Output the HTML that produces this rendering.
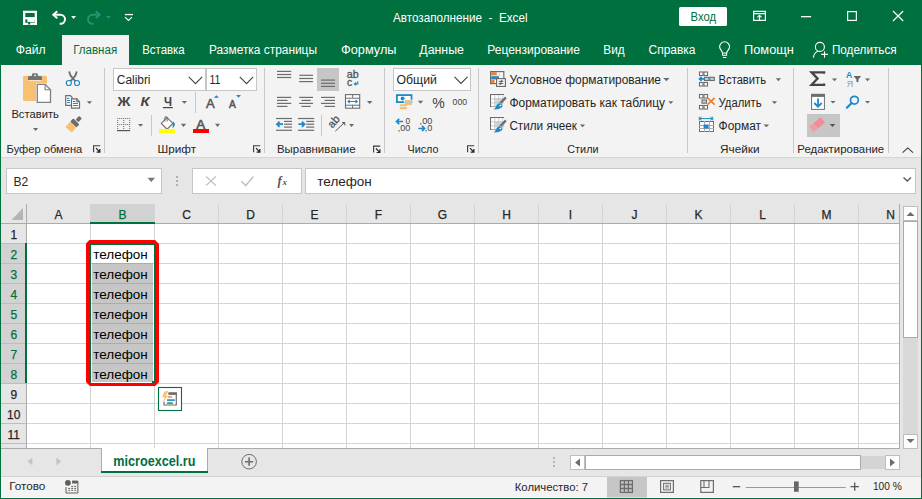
<!DOCTYPE html>
<html><head><meta charset="utf-8">
<style>
*{margin:0;padding:0}
html,body{width:922px;height:499px;overflow:hidden;background:#e6e6e6}
svg{display:block;font-family:"Liberation Sans",sans-serif}
</style></head><body>
<svg width="922" height="499" viewBox="0 0 922 499">
<rect x="0" y="0" width="922" height="65" fill="#00703f" />
<rect x="62" y="35" width="67" height="30" fill="#f3f3f3" />
<rect x="1" y="65" width="920" height="92" fill="#f3f3f3" />
<rect x="1" y="157" width="920" height="1" fill="#d5d5d5" />
<rect x="1" y="158" width="920" height="46" fill="#e6e6e6" />
<text x="393.0" y="22.0" font-size="12.2" fill="#ffffff" font-weight="normal" font-style="normal" textLength="134.5" lengthAdjust="spacingAndGlyphs">Автозаполнение&#160;&#160;-&#160;&#160;Excel</text>
<rect x="679" y="7" width="48" height="19" rx="1.5" fill="#ffffff"/>
<text x="690.5" y="20.7" font-size="12.0" fill="#00703f" font-weight="normal" font-style="normal" textLength="25.5" lengthAdjust="spacingAndGlyphs">Вход</text>
<text x="15.8" y="54.3" font-size="12.0" fill="#ffffff" font-weight="normal" font-style="normal" textLength="29.8" lengthAdjust="spacingAndGlyphs">Файл</text>
<text x="73.2" y="54.3" font-size="12.0" fill="#00703f" font-weight="normal" font-style="normal" textLength="44.0" lengthAdjust="spacingAndGlyphs">Главная</text>
<text x="142.2" y="54.3" font-size="12.0" fill="#ffffff" font-weight="normal" font-style="normal" textLength="42.5" lengthAdjust="spacingAndGlyphs">Вставка</text>
<text x="209.0" y="54.3" font-size="12.0" fill="#ffffff" font-weight="normal" font-style="normal" textLength="108.0" lengthAdjust="spacingAndGlyphs">Разметка страницы</text>
<text x="341.0" y="54.3" font-size="12.0" fill="#ffffff" font-weight="normal" font-style="normal" textLength="55.5" lengthAdjust="spacingAndGlyphs">Формулы</text>
<text x="419.3" y="54.3" font-size="12.0" fill="#ffffff" font-weight="normal" font-style="normal" textLength="44.6" lengthAdjust="spacingAndGlyphs">Данные</text>
<text x="487.3" y="54.3" font-size="12.0" fill="#ffffff" font-weight="normal" font-style="normal" textLength="92.7" lengthAdjust="spacingAndGlyphs">Рецензирование</text>
<text x="603.3" y="54.3" font-size="12.0" fill="#ffffff" font-weight="normal" font-style="normal" textLength="21.4" lengthAdjust="spacingAndGlyphs">Вид</text>
<text x="648.5" y="54.3" font-size="12.0" fill="#ffffff" font-weight="normal" font-style="normal" textLength="47.0" lengthAdjust="spacingAndGlyphs">Справка</text>
<text x="744.0" y="54.3" font-size="12.0" fill="#ffffff" font-weight="normal" font-style="normal" textLength="49.9" lengthAdjust="spacingAndGlyphs">Помощн</text>
<text x="831.9" y="54.3" font-size="12.0" fill="#ffffff" font-weight="normal" font-style="normal" textLength="64.8" lengthAdjust="spacingAndGlyphs">Поделиться</text>
<path d="M24.15 11.95 H35.85 V23.85 H24.15 Z" fill="none" stroke="#ffffff" stroke-width="2.3"/>
<rect x="25" y="17.1" width="10" height="2.3" fill="#ffffff" />
<rect x="27.4" y="19" width="7.3" height="3.2" fill="#ffffff" />
<rect x="28.1" y="21.9" width="2.1" height="2.6" fill="#00703f" />
<path d="M53.5 14.8 H60.5 A4.5 4.5 0 0 1 60.5 23.8 H59.6" fill="none" stroke="#ffffff" stroke-width="2"/>
<path d="M57.3 11.3 L53.3 14.8 L57.3 18.3" fill="none" stroke="#ffffff" stroke-width="2"/>
<path d="M71.1 16.1 H76 L73.55 18.9 Z" fill="#ffffff"/>
<path d="M99.5 14.8 H92.5 A4.5 4.5 0 0 0 92.5 23.8 H93.4" fill="none" stroke="#2a9070" stroke-width="2"/>
<path d="M95.7 11.3 L99.7 14.8 L95.7 18.3" fill="none" stroke="#2a9070" stroke-width="2"/>
<path d="M105.9 16 H110.9 L108.4 18.8 Z" fill="#2a9070"/>
<rect x="124.9" y="13.9" width="8.1" height="1.3" fill="#ffffff" />
<path d="M125 17.1 L128.5 20.4 L132 17.1" fill="none" stroke="#ffffff" stroke-width="1.2"/>
<path d="M753.6 11.4 H765.4 V20.4 H753.6 Z M753.6 13.6 H765.4 M759.5 15.2 V20.4" fill="none" stroke="#ffffff" stroke-width="1.2"/>
<path d="M757.4 17.3 L759.5 15.2 L761.6 17.3" fill="none" stroke="#ffffff" stroke-width="1.1"/>
<rect x="801" y="16" width="10.1" height="1.3" fill="#ffffff" />
<rect x="847.6" y="11.6" width="8.8" height="8.8" fill="none" stroke="#ffffff" stroke-width="1.2"/>
<path d="M893 11 L903.2 21 M903.2 11 L893 21" stroke="#ffffff" stroke-width="1.2"/>
<path d="M722.6 53 C722 50.5 719.6 49.2 719.6 46.8 A4.9 4.9 0 0 1 729.6 46.8 C729.6 49.2 727.2 50.5 726.6 53" fill="none" stroke="#ffffff" stroke-width="1.1"/>
<rect x="722.6" y="53.1" width="4" height="2.2" fill="none" stroke="#ffffff" stroke-width="1"/>
<rect x="723" y="57" width="3.4" height="1" fill="#ffffff" />
<circle cx="819.9" cy="46.9" r="4.5" fill="none" stroke="#ffffff" stroke-width="1.1"/>
<path d="M813.4 57.7 C813.8 54.2 815.8 52 818 51.3" fill="none" stroke="#ffffff" stroke-width="1.1"/>
<path d="M821.2 54.4 H827.9 M824.5 51.2 V57.7" stroke="#ffffff" stroke-width="1.1"/>
<rect x="104" y="68" width="1" height="85" fill="#c8c8c8" />
<rect x="264" y="68" width="1" height="85" fill="#c8c8c8" />
<rect x="384" y="68" width="1" height="85" fill="#c8c8c8" />
<rect x="478" y="68" width="1" height="85" fill="#c8c8c8" />
<rect x="687" y="68" width="1" height="85" fill="#c8c8c8" />
<rect x="793" y="68" width="1" height="85" fill="#c8c8c8" />
<rect x="888" y="68" width="1" height="85" fill="#c8c8c8" />
<text x="6.6" y="153.0" font-size="11.3" fill="#262626" font-weight="normal" font-style="normal" textLength="75.7" lengthAdjust="spacingAndGlyphs">Буфер обмена</text>
<text x="157.5" y="153.0" font-size="11.3" fill="#262626" font-weight="normal" font-style="normal" textLength="38.5" lengthAdjust="spacingAndGlyphs">Шрифт</text>
<text x="277.0" y="153.0" font-size="11.3" fill="#262626" font-weight="normal" font-style="normal" textLength="78.5" lengthAdjust="spacingAndGlyphs">Выравнивание</text>
<text x="407.5" y="153.0" font-size="11.3" fill="#262626" font-weight="normal" font-style="normal" textLength="31.0" lengthAdjust="spacingAndGlyphs">Число</text>
<text x="567.3" y="153.0" font-size="11.3" fill="#262626" font-weight="normal" font-style="normal" textLength="31.2" lengthAdjust="spacingAndGlyphs">Стили</text>
<text x="720.0" y="153.0" font-size="11.3" fill="#262626" font-weight="normal" font-style="normal" textLength="39.5" lengthAdjust="spacingAndGlyphs">Ячейки</text>
<text x="797.3" y="153.0" font-size="11.3" fill="#262626" font-weight="normal" font-style="normal" textLength="86.9" lengthAdjust="spacingAndGlyphs">Редактирование</text>
<path d="M93.6 152.2 V145.79999999999998 H100.2" fill="none" stroke="#3a3a3a" stroke-width="1.1"/>
<path d="M96 148.2 L99.8 152.0 M99.9 149.0 V152.2 H96.6" fill="none" stroke="#262626" stroke-width="1.2"/>
<path d="M253.6 152.2 V145.79999999999998 H260.2" fill="none" stroke="#3a3a3a" stroke-width="1.1"/>
<path d="M256 148.2 L259.8 152.0 M259.9 149.0 V152.2 H256.6" fill="none" stroke="#262626" stroke-width="1.2"/>
<path d="M373.6 152.5 V146.1 H380.2" fill="none" stroke="#3a3a3a" stroke-width="1.1"/>
<path d="M376 148.5 L379.8 152.3 M379.9 149.3 V152.5 H376.6" fill="none" stroke="#262626" stroke-width="1.2"/>
<path d="M467.6 152.2 V145.79999999999998 H474.2" fill="none" stroke="#3a3a3a" stroke-width="1.1"/>
<path d="M470 148.2 L473.8 152.0 M473.9 149.0 V152.2 H470.6" fill="none" stroke="#262626" stroke-width="1.2"/>
<path d="M902.6 152.6 L907.8 147.9 L913 152.6" fill="none" stroke="#3a3a3a" stroke-width="1.1"/>
<rect x="23" y="75.8" width="24" height="25.3" rx="1.5" fill="#f8c172"/>
<path d="M28 80 V77.5 Q28 76 29.5 76 H32 V74.6 Q32 73.2 33.4 73.2 H36.5 Q37.9 73.2 37.9 74.6 V76 H40.5 Q42 76 42 77.5 V80 Z" fill="#737373"/>
<rect x="34.2" y="74.6" width="1.6" height="1.6" fill="#f3f3f3" />
<rect x="28.6" y="80" width="12.8" height="1.1" fill="#f9e3c0" />
<path d="M36 83 H45.6 L51.8 89.2 V103.6 H36 Z" fill="#f3f3f3"/>
<path d="M37.3 84.3 H45.1 L50.5 89.7 V102.3 H37.3 Z" fill="#ffffff" stroke="#808080" stroke-width="1.3"/>
<path d="M45.1 84.3 V89.7 H50.5" fill="none" stroke="#808080" stroke-width="1.1"/>
<text x="11.4" y="118.0" font-size="11.8" fill="#262626" font-weight="normal" font-style="normal" textLength="47.5" lengthAdjust="spacingAndGlyphs">Вставить</text>
<path d="M33 128 H38.2 L35.60 131 Z" fill="#6a6a6a"/>
<path d="M69.4 72.3 C69.8 75.2 71.3 77 73 78.6 L75.2 80.8 M76.5 72.3 C76.1 75.2 74.6 77 72.9 78.6 L70.7 80.8" stroke="#6d6d6d" stroke-width="1.9" fill="none" stroke-linecap="round"/>
<circle cx="68.8" cy="83" r="2.5" fill="#f8f8f8" stroke="#1e88c8" stroke-width="1.2"/>
<circle cx="77" cy="83" r="2.5" fill="#f8f8f8" stroke="#1e88c8" stroke-width="1.2"/>
<path d="M65.7 95.7 H70.4 L72 97.3 V105.3 H65.7 Z" fill="#fff" stroke="#6d6d6d" stroke-width="1.2"/>
<path d="M71.5 98.8 H76.6 L79.5 101.7 V108.1 H71.5 Z" fill="#fff" stroke="#6d6d6d" stroke-width="1.2"/>
<rect x="76.2" y="98.4" width="1.2" height="2.6" fill="#6d6d6d" />
<rect x="76.2" y="101.2" width="3.2" height="1.1" fill="#6d6d6d" />
<rect x="67" y="97.8" width="2.4" height="1" fill="#1e88c8" />
<rect x="67" y="100" width="3.2" height="1" fill="#1e88c8" />
<rect x="67" y="102.1" width="3.2" height="1" fill="#1e88c8" />
<rect x="73" y="101" width="2.4" height="1" fill="#1e88c8" />
<rect x="73" y="103" width="4.9" height="1" fill="#1e88c8" />
<rect x="73" y="105" width="4.9" height="1" fill="#1e88c8" />
<path d="M86.9 101.2 H92 L89.45 104 Z" fill="#6a6a6a"/>
<g transform="translate(74.7,123.1) rotate(-45)"><path d="M-2.4 -4.3 V4.3 L-8.6 4.6 L-9.4 -3.6 Z" fill="#f8c172"/><rect x="-2" y="-4.3" width="4.4" height="8.6" rx="1" fill="#6d6d6d"/><rect x="3.3" y="-1.9" width="5" height="3.8" rx="1" fill="#6d6d6d"/></g>
<rect x="113.5" y="68.5" width="92" height="22" fill="#ffffff" stroke="#c6c6c6" stroke-width="1"/>
<rect x="206.5" y="68.5" width="50" height="22" fill="#ffffff" stroke="#c6c6c6" stroke-width="1"/>
<text x="116.8" y="83.8" font-size="12.3" fill="#262626" font-weight="normal" font-style="normal" textLength="33.7" lengthAdjust="spacingAndGlyphs">Calibri</text>
<text x="209.5" y="83.8" font-size="12.3" fill="#262626" font-weight="normal" font-style="normal" textLength="11.0" lengthAdjust="spacingAndGlyphs">11</text>
<path d="M188.8 76.8 L195.5 83.6 L202.2 76.8" fill="none" stroke="#444" stroke-width="1.1"/>
<path d="M239.8 76.8 L246.5 83.6 L253.2 76.8" fill="none" stroke="#444" stroke-width="1.1"/>
<text x="117.5" y="106.1" font-size="12.4" fill="#444444" font-weight="bold" font-style="normal" textLength="12.9" lengthAdjust="spacingAndGlyphs">Ж</text>
<text x="140.5" y="106.1" font-size="12.4" fill="#444444" font-weight="bold" font-style="italic" textLength="9.1" lengthAdjust="spacingAndGlyphs">К</text>
<text x="163.9" y="106.1" font-size="12.4" fill="#444444" font-weight="bold" font-style="normal" textLength="8.0" lengthAdjust="spacingAndGlyphs">Ч</text>
<rect x="163" y="107" width="9.8" height="1.2" fill="#444444" />
<path d="M181.7 101.1 H187.1 L184.40 103.8 Z" fill="#6a6a6a"/>
<rect x="195" y="92" width="1" height="21" fill="#c8c8c8" />
<text x="206" y="107.5" font-size="13" fill="#555" stroke="#555" stroke-width="0.5">A</text>
<path d="M213.8 97.8 H219 L216.4 95.2 Z" fill="#1e88c8"/>
<text x="228.9" y="107.5" font-size="10.2" fill="#555" stroke="#555" stroke-width="0.5">A</text>
<path d="M236 95 H241 L238.5 97.8 Z" fill="#1e88c8"/>
<rect x="117.2" y="118" width="1" height="1" fill="#666" />
<rect x="117.2" y="120" width="1" height="1" fill="#666" />
<rect x="117.2" y="122" width="1" height="1" fill="#666" />
<rect x="117.2" y="124" width="1" height="1" fill="#666" />
<rect x="117.2" y="126" width="1" height="1" fill="#666" />
<rect x="117.2" y="128" width="1" height="1" fill="#666" />
<rect x="119.2" y="118" width="1" height="1" fill="#666" />
<rect x="119.2" y="124" width="1" height="1" fill="#666" />
<rect x="121.2" y="118" width="1" height="1" fill="#666" />
<rect x="121.2" y="124" width="1" height="1" fill="#666" />
<rect x="123.2" y="118" width="1" height="1" fill="#666" />
<rect x="123.2" y="120" width="1" height="1" fill="#666" />
<rect x="123.2" y="122" width="1" height="1" fill="#666" />
<rect x="123.2" y="124" width="1" height="1" fill="#666" />
<rect x="123.2" y="126" width="1" height="1" fill="#666" />
<rect x="123.2" y="128" width="1" height="1" fill="#666" />
<rect x="125.2" y="118" width="1" height="1" fill="#666" />
<rect x="125.2" y="124" width="1" height="1" fill="#666" />
<rect x="127.2" y="118" width="1" height="1" fill="#666" />
<rect x="127.2" y="124" width="1" height="1" fill="#666" />
<rect x="129.2" y="118" width="1" height="1" fill="#666" />
<rect x="129.2" y="120" width="1" height="1" fill="#666" />
<rect x="129.2" y="122" width="1" height="1" fill="#666" />
<rect x="129.2" y="124" width="1" height="1" fill="#666" />
<rect x="129.2" y="126" width="1" height="1" fill="#666" />
<rect x="129.2" y="128" width="1" height="1" fill="#666" />
<rect x="117" y="130" width="13.2" height="1.2" fill="#555" />
<path d="M138 123.9 H143.1 L140.55 126.8 Z" fill="#6a6a6a"/>
<rect x="151" y="115" width="1" height="21" fill="#c8c8c8" />
<path d="M167.1 117.6 L172.9 123.4 L167.1 129.2 L161.3 123.4 Z" fill="#fff" stroke="#6d6d6d" stroke-width="1.1"/>
<path d="M164.8 121.5 V117.8 Q164.8 116.6 166 116.6 Q167.2 116.6 167.2 117.8 V121.5" fill="none" stroke="#6d6d6d" stroke-width="1"/>
<path d="M172.6 121.5 Q175.4 122.6 174.8 125.2 Q174.2 127.6 172.3 127.9 Q173.4 124.5 172.6 121.5 Z" fill="#1e88c8"/>
<rect x="159" y="129" width="16" height="4" fill="#ffff00" />
<path d="M180.8 123.8 H186.2 L183.50 127 Z" fill="#6a6a6a"/>
<text x="196.2" y="128.6" font-size="13.4" fill="#555" stroke="#555" stroke-width="0.6">A</text>
<rect x="193" y="129" width="16" height="4" fill="#ff0000" />
<path d="M215 123.8 H220.1 L217.55 127 Z" fill="#6a6a6a"/>
<rect x="277" y="70.80000000000001" width="14.199999999999989" height="1.2" fill="#6d6d6d" />
<rect x="277" y="73.9" width="14.199999999999989" height="1.2" fill="#6d6d6d" />
<rect x="277" y="76.9" width="14.199999999999989" height="1.2" fill="#6d6d6d" />
<rect x="299.2" y="74.7" width="13.800000000000011" height="1.2" fill="#6d6d6d" />
<rect x="299.2" y="77.9" width="13.800000000000011" height="1.2" fill="#6d6d6d" />
<rect x="299.2" y="81.0" width="13.800000000000011" height="1.2" fill="#6d6d6d" />
<rect x="317" y="68" width="22" height="23" fill="#c6c6c6" />
<rect x="321" y="79.5" width="14" height="1.2" fill="#6d6d6d" />
<rect x="321" y="82.7" width="14" height="1.2" fill="#6d6d6d" />
<rect x="321" y="85.80000000000001" width="14" height="1.2" fill="#6d6d6d" />
<text x="346.8" y="78.4" font-size="10.4" fill="#555" stroke="#555" stroke-width="0.3" textLength="12" lengthAdjust="spacingAndGlyphs">ab</text>
<text x="347" y="85.8" font-size="10.4" fill="#555" stroke="#555" stroke-width="0.3">c</text>
<path d="M357.8 81.2 V83.9 H354.6 M356.2 82.5 L354.4 83.9 L356.2 85.3" fill="none" stroke="#1e88c8" stroke-width="1.1"/>
<rect x="277" y="96.80000000000001" width="14.199999999999989" height="1.2" fill="#6d6d6d" />
<rect x="277" y="99.80000000000001" width="10.5" height="1.2" fill="#6d6d6d" />
<rect x="277" y="102.80000000000001" width="14.199999999999989" height="1.2" fill="#6d6d6d" />
<rect x="277" y="105.80000000000001" width="10.5" height="1.2" fill="#6d6d6d" />
<rect x="299.2" y="96.80000000000001" width="13.800000000000011" height="1.2" fill="#6d6d6d" />
<rect x="301.5" y="99.80000000000001" width="9.199999999999989" height="1.2" fill="#6d6d6d" />
<rect x="299.2" y="102.80000000000001" width="13.800000000000011" height="1.2" fill="#6d6d6d" />
<rect x="301.5" y="105.80000000000001" width="9.199999999999989" height="1.2" fill="#6d6d6d" />
<rect x="321" y="96.80000000000001" width="14" height="1.2" fill="#6d6d6d" />
<rect x="324.5" y="99.80000000000001" width="10.5" height="1.2" fill="#6d6d6d" />
<rect x="321" y="102.80000000000001" width="14" height="1.2" fill="#6d6d6d" />
<rect x="324.5" y="105.80000000000001" width="10.5" height="1.2" fill="#6d6d6d" />
<rect x="345.5" y="94.6" width="14.2" height="13.6" fill="#fff" stroke="#6d6d6d" stroke-width="1.1"/>
<rect x="345.5" y="97.7" width="14.2" height="1" fill="#6d6d6d" />
<rect x="345.5" y="104.7" width="14.2" height="1" fill="#6d6d6d" />
<rect x="352.1" y="94.6" width="1" height="3" fill="#6d6d6d" />
<rect x="352.1" y="104.9" width="1" height="3.3" fill="#6d6d6d" />
<path d="M348 101.5 H357.3 M349.8 99.8 L348 101.5 L349.8 103.2 M355.5 99.8 L357.3 101.5 L355.5 103.2" fill="none" stroke="#1e88c8" stroke-width="1.1"/>
<path d="M366.9 101 H372.4 L369.65 104 Z" fill="#6a6a6a"/>
<rect x="276" y="117.9" width="16" height="1.2" fill="#6d6d6d" />
<rect x="284" y="120.80000000000001" width="8" height="1.2" fill="#6d6d6d" />
<rect x="284" y="123.60000000000001" width="8" height="1.2" fill="#6d6d6d" />
<rect x="284" y="126.5" width="8" height="1.2" fill="#6d6d6d" />
<rect x="276" y="129.70000000000002" width="16" height="1.2" fill="#6d6d6d" />
<path d="M283 124.2 H277 M279.6 121.6 L277 124.2 L279.6 126.8" fill="none" stroke="#1e88c8" stroke-width="1.8"/>
<rect x="298" y="117.9" width="16.19999999999999" height="1.2" fill="#6d6d6d" />
<rect x="306.2" y="120.80000000000001" width="8.0" height="1.2" fill="#6d6d6d" />
<rect x="306.2" y="123.60000000000001" width="8.0" height="1.2" fill="#6d6d6d" />
<rect x="306.2" y="126.5" width="8.0" height="1.2" fill="#6d6d6d" />
<rect x="298" y="129.70000000000002" width="16.19999999999999" height="1.2" fill="#6d6d6d" />
<path d="M298.5 124.2 H304.5 M301.9 121.6 L304.5 124.2 L301.9 126.8" fill="none" stroke="#1e88c8" stroke-width="1.8"/>
<rect x="321" y="115" width="1" height="21" fill="#c8c8c8" />
<text x="0" y="0" font-size="11" fill="#555" stroke="#555" stroke-width="0.3" transform="translate(332.6,128.8) rotate(-50)">ab</text>
<path d="M335.3 131.2 L344.8 122.3 M342 122.6 H344.8 V125.4" fill="none" stroke="#555" stroke-width="1"/>
<path d="M349 124.1 H354.1 L351.55 126.9 Z" fill="#6a6a6a"/>
<rect x="393.5" y="68.5" width="77" height="22" fill="#ffffff" stroke="#c6c6c6" stroke-width="1"/>
<text x="396.5" y="84.3" font-size="12.0" fill="#262626" font-weight="normal" font-style="normal" textLength="40.4" lengthAdjust="spacingAndGlyphs">Общий</text>
<path d="M454.5 76.8 L461 83.4 L467.5 76.8" fill="none" stroke="#444" stroke-width="1.1"/>
<rect x="396.9" y="95.1" width="14.6" height="7" fill="#fff" stroke="#1e88c8" stroke-width="1.8"/>
<circle cx="402.6" cy="98.6" r="2" fill="#1e88c8"/>
<path d="M403.8 99.6 H412.6 V102.6 H403.8 Z" fill="#f3f3f3"/>
<rect x="404.6" y="100.1" width="7.6" height="2.1" rx="1" fill="#f8c172"/><rect x="404.6" y="103" width="7.6" height="2.1" rx="1" fill="#f8c172"/>
<rect x="399.6" y="104.2" width="7.6" height="2.1" rx="1" fill="#f8c172"/><rect x="399.6" y="107.1" width="7.6" height="2.1" rx="1" fill="#f8c172"/>
<path d="M417.8 100.8 H423.2 L420.50 103.8 Z" fill="#6a6a6a"/>
<text x="432.3" y="107.5" font-size="14.2" fill="#444" font-weight="normal" font-style="normal" textLength="12.5" lengthAdjust="spacingAndGlyphs">%</text>
<text x="452.6" y="104.8" font-size="9.6" fill="#444" font-weight="normal" font-style="normal" textLength="14.6" lengthAdjust="spacingAndGlyphs">000</text>
<path d="M403 121.5 H396.6 M399.2 118.9 L396.6 121.5 L399.2 124.1" fill="none" stroke="#1e88c8" stroke-width="1.7"/>
<text x="405.6" y="123.8" font-size="8.4" fill="#444">0</text>
<text x="397.8" y="131.2" font-size="8.4" fill="#444" font-weight="normal" font-style="normal" textLength="12.6" lengthAdjust="spacingAndGlyphs">,00</text>
<text x="419.6" y="124.0" font-size="8.4" fill="#444" font-weight="normal" font-style="normal" textLength="12.8" lengthAdjust="spacingAndGlyphs">,00</text>
<path d="M418.3 128.5 H424.6 M422 125.9 L424.6 128.5 L422 131.1" fill="none" stroke="#1e88c8" stroke-width="1.7"/>
<text x="424.8" y="131.2" font-size="8.4" fill="#444" font-weight="normal" font-style="normal" textLength="7.6" lengthAdjust="spacingAndGlyphs">,0</text>
<rect x="490.6" y="71.6" width="13.2" height="12" fill="#fff" stroke="#6d6d6d" stroke-width="1.2"/>
<rect x="491.2" y="72.2" width="5.6" height="3.2" fill="#ed7d31" />
<rect x="498.8" y="72.2" width="0.9" height="3.2" fill="#c8c8c8" />
<rect x="491.2" y="75.4" width="12" height="0.8" fill="#d8d8d8" />
<rect x="491.2" y="76.2" width="7.8" height="3.3" fill="#1e88c8" />
<rect x="491.2" y="80" width="3.4" height="3.2" fill="#ed7d31" />
<rect x="496.6" y="78.6" width="8.8" height="7.8" fill="#fff" stroke="#6d6d6d" stroke-width="1.2"/>
<path d="M498.6 81.3 H503.4 M498.6 83.6 H503.4 M502.1 79.9 L499.9 85" stroke="#444" stroke-width="0.9"/>
<text x="509.4" y="84.2" font-size="12.0" fill="#262626" font-weight="normal" font-style="normal" textLength="151.6" lengthAdjust="spacingAndGlyphs">Условное форматирование</text>
<path d="M663.3 78 H669.5 L666.4 81.2 Z" fill="#6a6a6a"/>
<path d="M504 94.6 H490.6 V106.4 H497" fill="none" stroke="#6d6d6d" stroke-width="1.2"/>
<rect x="491.2" y="95.2" width="12.8" height="11.2" fill="#ffffff" />
<rect x="495.2" y="98.4" width="7" height="7" fill="#c5dede" />
<rect x="494.3" y="95.2" width="0.9" height="11.2" fill="#c4c4c4" />
<rect x="498.3" y="95.2" width="0.9" height="11.2" fill="#c4c4c4" />
<rect x="502.3" y="95.2" width="0.9" height="11.2" fill="#c4c4c4" />
<rect x="491.2" y="98.4" width="12.8" height="0.9" fill="#c4c4c4" />
<rect x="491.2" y="102.4" width="12.8" height="0.9" fill="#c4c4c4" />
<path d="M505.2 96.6 L506.6 98.6 L501.4 103.8 L499.4 102.4 Z" fill="#6d6d6d"/>
<path d="M499.6 103.2 Q502.4 104.2 502.6 106 Q501.6 109.2 493.6 109.6 Q495.8 107.4 496.4 105.4 Q497.4 103.4 499.6 103.2 Z" fill="#1e88c8"/>
<ellipse cx="500.4" cy="105.6" rx="1" ry="0.8" fill="#ffffff"/>
<text x="509.4" y="107.4" font-size="12.0" fill="#262626" font-weight="normal" font-style="normal" textLength="155.6" lengthAdjust="spacingAndGlyphs">Форматировать как таблицу</text>
<path d="M668.3 101.2 H673.3 L670.8 104 Z" fill="#6a6a6a"/>
<path d="M504 117.6 H490.6 V129.4 H497" fill="none" stroke="#6d6d6d" stroke-width="1.2"/>
<rect x="491.2" y="118.2" width="12.8" height="11.2" fill="#ffffff" />
<rect x="495.2" y="121.4" width="9" height="6" fill="#c5dede" />
<rect x="494.3" y="118.2" width="0.9" height="11.2" fill="#c4c4c4" />
<rect x="498.3" y="118.2" width="0.9" height="11.2" fill="#c4c4c4" />
<rect x="502.3" y="118.2" width="0.9" height="11.2" fill="#c4c4c4" />
<rect x="491.2" y="121.4" width="12.8" height="0.9" fill="#c4c4c4" />
<rect x="491.2" y="125.4" width="12.8" height="0.9" fill="#c4c4c4" />
<path d="M505.2 119.6 L506.6 121.6 L501.4 126.8 L499.4 125.4 Z" fill="#6d6d6d"/>
<path d="M499.6 126.2 Q502.4 127.2 502.6 129 Q501.6 132.2 493.6 132.6 Q495.8 130.4 496.4 128.4 Q497.4 126.4 499.6 126.2 Z" fill="#1e88c8"/>
<ellipse cx="500.4" cy="128.6" rx="1" ry="0.8" fill="#ffffff"/>
<text x="509.4" y="130.3" font-size="12.0" fill="#262626" font-weight="normal" font-style="normal" textLength="67.6" lengthAdjust="spacingAndGlyphs">Стили ячеек</text>
<path d="M579.8 124.4 H585.2 L582.5 127.2 Z" fill="#6a6a6a"/>
<rect x="699.5" y="72.0" width="3.5" height="3.5" fill="#fff" stroke="#6d6d6d" stroke-width="1.1"/>
<rect x="704.0" y="72.0" width="3.5" height="3.5" fill="#fff" stroke="#6d6d6d" stroke-width="1.1"/>
<rect x="699.5" y="82.5" width="3.5" height="3.5" fill="#fff" stroke="#6d6d6d" stroke-width="1.1"/>
<rect x="704.0" y="82.5" width="3.5" height="3.5" fill="#fff" stroke="#6d6d6d" stroke-width="1.1"/>
<rect x="704.5" y="77.3" width="4.5" height="3.2" fill="#b6d6d6" stroke="#6d6d6d" stroke-width="1.1"/>
<rect x="709.8" y="77.3" width="4.5" height="3.2" fill="#b6d6d6" stroke="#6d6d6d" stroke-width="1.1"/>
<path d="M705 78.9 H699.5 M701.6 76.9 L699.5 78.9 L701.6 80.9" fill="none" stroke="#1e88c8" stroke-width="1.6"/>
<text x="718.6" y="83.6" font-size="12.0" fill="#262626" font-weight="normal" font-style="normal" textLength="47.4" lengthAdjust="spacingAndGlyphs">Вставить</text>
<path d="M775.8 78.3 H781 L778.40 81.2 Z" fill="#6a6a6a"/>
<rect x="699.5" y="94.5" width="3.5" height="3.5" fill="#fff" stroke="#6d6d6d" stroke-width="1.1"/>
<rect x="704.0" y="94.5" width="3.5" height="3.5" fill="#fff" stroke="#6d6d6d" stroke-width="1.1"/>
<rect x="699.5" y="105.5" width="3.5" height="3.5" fill="#fff" stroke="#6d6d6d" stroke-width="1.1"/>
<rect x="704.0" y="105.5" width="3.5" height="3.5" fill="#fff" stroke="#6d6d6d" stroke-width="1.1"/>
<rect x="702.0" y="100.0" width="4.5" height="3.2" fill="#b6d6d6" stroke="#6d6d6d" stroke-width="1.1"/>
<path d="M707.5 97.8 L714.6 104.6 M714.6 97.8 L707.5 104.6" stroke="#ed7d31" stroke-width="1.6"/>
<text x="718.6" y="106.7" font-size="12.0" fill="#262626" font-weight="normal" font-style="normal" textLength="43.0" lengthAdjust="spacingAndGlyphs">Удалить</text>
<path d="M771.9 101.2 H777.1 L774.50 104 Z" fill="#6a6a6a"/>
<path d="M699.7 118.6 H712.3 M701.6 116.9 L699.7 118.6 L701.6 120.3 M710.4 116.9 L712.3 118.6 L710.4 120.3 M699.3 116.8 V120.4 M712.7 116.8 V120.4" fill="none" stroke="#1e88c8" stroke-width="1"/>
<rect x="699.5" y="121.5" width="14" height="10" fill="#fff" stroke="#6d6d6d" stroke-width="1"/>
<rect x="704" y="121" width="1" height="11" fill="#a8a8a8" />
<rect x="709" y="121" width="1" height="11" fill="#a8a8a8" />
<rect x="699" y="125" width="15" height="1" fill="#a8a8a8" />
<rect x="699" y="128" width="15" height="1" fill="#a8a8a8" />
<rect x="703.6" y="124.5" width="5" height="4" fill="#1e88c8" />
<text x="718.6" y="129.6" font-size="12.0" fill="#262626" font-weight="normal" font-style="normal" textLength="42.4" lengthAdjust="spacingAndGlyphs">Формат</text>
<path d="M763.5 124.4 H769.2 L766.35 127.2 Z" fill="#6a6a6a"/>
<path d="M824.1 73.8 V72.4 H811.6 L817.6 78.6 L811.6 84.8 H824.1 V83.4" fill="none" stroke="#444" stroke-width="2.3"/>
<path d="M831.9 78.6 H837.1 L834.50 81.2 Z" fill="#6a6a6a"/>
<text x="846.0" y="77.9" font-size="8.8" fill="#1e88c8" font-weight="bold" font-style="normal" textLength="6.2" lengthAdjust="spacingAndGlyphs">A</text>
<text x="846.8" y="86.8" font-size="8.8" fill="#999" font-weight="normal" font-style="normal" textLength="6.4" lengthAdjust="spacingAndGlyphs">Я</text>
<path d="M853.7 76.1 H861.1 L858.4 79.4 V82.6 L856.4 81.8 V79.4 Z" fill="#666"/>
<path d="M865 78.6 H870.1 L867.55 81.2 Z" fill="#6a6a6a"/>
<rect x="811.6" y="94.4" width="12.8" height="15" fill="#fff" stroke="#6d6d6d" stroke-width="1"/>
<rect x="811.1" y="93.9" width="13.8" height="3" fill="#6d6d6d" />
<path d="M818 98.5 V106.5 M814.3 103 L818 106.7 L821.7 103" fill="none" stroke="#1e88c8" stroke-width="1.8"/>
<path d="M830.4 100.9 H835.6 L833.00 103.4 Z" fill="#6a6a6a"/>
<circle cx="854.4" cy="100.2" r="3.9" fill="none" stroke="#1e88c8" stroke-width="1.7"/>
<path d="M851.6 103 L846.9 107.7" stroke="#1e88c8" stroke-width="2.2" stroke-linecap="round"/>
<path d="M865 100.9 H870.1 L867.55 103.4 Z" fill="#6a6a6a"/>
<rect x="807" y="114" width="33" height="23" fill="#c6c6c6" />
<g transform="translate(817.3,124.5) rotate(-40)"><rect x="-7.5" y="-3.4" width="5" height="6.8" fill="#f49aa4"/><rect x="-2.2" y="-3.4" width="9.3" height="6.8" fill="#f28b96"/></g>
<path d="M829.7 123.9 H835.3 L832.50 127.1 Z" fill="#555"/>
<rect x="6.5" y="168.5" width="155" height="25" fill="#ffffff" stroke="#c6c6c6" stroke-width="1"/>
<text x="13.4" y="185.8" font-size="12.3" fill="#262626" font-weight="normal" font-style="normal" textLength="14.8" lengthAdjust="spacingAndGlyphs">B2</text>
<path d="M147.5 177.8 L155.1 177.8 L151.3 182.1 Z" fill="#777"/>
<rect x="176" y="176" width="2" height="2" fill="#b0b0b0" />
<rect x="176" y="180" width="2" height="2" fill="#b0b0b0" />
<rect x="176" y="184" width="2" height="2" fill="#b0b0b0" />
<rect x="192.5" y="168.5" width="109" height="25" fill="#ffffff" stroke="#c6c6c6" stroke-width="1"/>
<rect x="305.5" y="168.5" width="610" height="25" fill="#ffffff" stroke="#c6c6c6" stroke-width="1"/>
<text x="317.3" y="186.2" font-size="13.0" fill="#262626" font-weight="normal" font-style="normal" textLength="54.5" lengthAdjust="spacingAndGlyphs">телефон</text>
<path d="M903.5 177.5 L907.25 181 L911 177.5" fill="none" stroke="#555" stroke-width="1.3"/>
<rect x="1" y="204" width="899" height="19" fill="#e6e6e6" />
<rect x="1" y="223" width="899" height="1" fill="#ababab" />
<rect x="1" y="224" width="26" height="224" fill="#e6e6e6" />
<rect x="26" y="204" width="1" height="244" fill="#ababab" />
<path d="M11.5 220 L23 220 L23 208 Z" fill="#b4b4b4"/>
<rect x="27" y="224" width="873" height="224" fill="#ffffff" />
<rect x="90" y="204" width="1" height="19" fill="#d4d4d4" />
<rect x="90" y="224" width="1" height="224" fill="#d4d4d4" />
<rect x="154" y="204" width="1" height="19" fill="#d4d4d4" />
<rect x="154" y="224" width="1" height="224" fill="#d4d4d4" />
<rect x="218" y="204" width="1" height="19" fill="#d4d4d4" />
<rect x="218" y="224" width="1" height="224" fill="#d4d4d4" />
<rect x="282" y="204" width="1" height="19" fill="#d4d4d4" />
<rect x="282" y="224" width="1" height="224" fill="#d4d4d4" />
<rect x="346" y="204" width="1" height="19" fill="#d4d4d4" />
<rect x="346" y="224" width="1" height="224" fill="#d4d4d4" />
<rect x="410" y="204" width="1" height="19" fill="#d4d4d4" />
<rect x="410" y="224" width="1" height="224" fill="#d4d4d4" />
<rect x="474" y="204" width="1" height="19" fill="#d4d4d4" />
<rect x="474" y="224" width="1" height="224" fill="#d4d4d4" />
<rect x="538" y="204" width="1" height="19" fill="#d4d4d4" />
<rect x="538" y="224" width="1" height="224" fill="#d4d4d4" />
<rect x="602" y="204" width="1" height="19" fill="#d4d4d4" />
<rect x="602" y="224" width="1" height="224" fill="#d4d4d4" />
<rect x="666" y="204" width="1" height="19" fill="#d4d4d4" />
<rect x="666" y="224" width="1" height="224" fill="#d4d4d4" />
<rect x="730" y="204" width="1" height="19" fill="#d4d4d4" />
<rect x="730" y="224" width="1" height="224" fill="#d4d4d4" />
<rect x="794" y="204" width="1" height="19" fill="#d4d4d4" />
<rect x="794" y="224" width="1" height="224" fill="#d4d4d4" />
<rect x="858" y="204" width="1" height="19" fill="#d4d4d4" />
<rect x="858" y="224" width="1" height="224" fill="#d4d4d4" />
<rect x="27" y="243" width="873" height="1" fill="#d4d4d4" />
<rect x="1" y="243" width="25" height="1" fill="#bdbdbd" />
<rect x="27" y="263" width="873" height="1" fill="#d4d4d4" />
<rect x="1" y="263" width="25" height="1" fill="#bdbdbd" />
<rect x="27" y="283" width="873" height="1" fill="#d4d4d4" />
<rect x="1" y="283" width="25" height="1" fill="#bdbdbd" />
<rect x="27" y="303" width="873" height="1" fill="#d4d4d4" />
<rect x="1" y="303" width="25" height="1" fill="#bdbdbd" />
<rect x="27" y="323" width="873" height="1" fill="#d4d4d4" />
<rect x="1" y="323" width="25" height="1" fill="#bdbdbd" />
<rect x="27" y="343" width="873" height="1" fill="#d4d4d4" />
<rect x="1" y="343" width="25" height="1" fill="#bdbdbd" />
<rect x="27" y="363" width="873" height="1" fill="#d4d4d4" />
<rect x="1" y="363" width="25" height="1" fill="#bdbdbd" />
<rect x="27" y="383" width="873" height="1" fill="#d4d4d4" />
<rect x="1" y="383" width="25" height="1" fill="#bdbdbd" />
<rect x="27" y="403" width="873" height="1" fill="#d4d4d4" />
<rect x="1" y="403" width="25" height="1" fill="#bdbdbd" />
<rect x="27" y="423" width="873" height="1" fill="#d4d4d4" />
<rect x="1" y="423" width="25" height="1" fill="#bdbdbd" />
<rect x="27" y="443" width="873" height="1" fill="#d4d4d4" />
<rect x="1" y="443" width="25" height="1" fill="#bdbdbd" />
<text x="58.5" y="218.5" font-size="12" fill="#262626" stroke="#262626" stroke-width="0.25" text-anchor="middle">A</text>
<text x="122.5" y="218.5" font-size="12" fill="#262626" stroke="#262626" stroke-width="0.25" text-anchor="middle">B</text>
<text x="186.5" y="218.5" font-size="12" fill="#262626" stroke="#262626" stroke-width="0.25" text-anchor="middle">C</text>
<text x="250.5" y="218.5" font-size="12" fill="#262626" stroke="#262626" stroke-width="0.25" text-anchor="middle">D</text>
<text x="314.5" y="218.5" font-size="12" fill="#262626" stroke="#262626" stroke-width="0.25" text-anchor="middle">E</text>
<text x="378.5" y="218.5" font-size="12" fill="#262626" stroke="#262626" stroke-width="0.25" text-anchor="middle">F</text>
<text x="442.5" y="218.5" font-size="12" fill="#262626" stroke="#262626" stroke-width="0.25" text-anchor="middle">G</text>
<text x="506.5" y="218.5" font-size="12" fill="#262626" stroke="#262626" stroke-width="0.25" text-anchor="middle">H</text>
<text x="570.5" y="218.5" font-size="12" fill="#262626" stroke="#262626" stroke-width="0.25" text-anchor="middle">I</text>
<text x="634.5" y="218.5" font-size="12" fill="#262626" stroke="#262626" stroke-width="0.25" text-anchor="middle">J</text>
<text x="698.5" y="218.5" font-size="12" fill="#262626" stroke="#262626" stroke-width="0.25" text-anchor="middle">K</text>
<text x="762.5" y="218.5" font-size="12" fill="#262626" stroke="#262626" stroke-width="0.25" text-anchor="middle">L</text>
<text x="826.5" y="218.5" font-size="12" fill="#262626" stroke="#262626" stroke-width="0.25" text-anchor="middle">M</text>
<text x="890.5" y="218.5" font-size="12" fill="#262626" stroke="#262626" stroke-width="0.25" text-anchor="middle">N</text>
<rect x="91" y="204" width="63" height="18" fill="#d2d2d2" />
<rect x="90" y="222" width="65" height="2" fill="#00703f" />
<text x="122.5" y="218.5" font-size="12" fill="#00703f" stroke="#00703f" stroke-width="0.25" text-anchor="middle">B</text>
<text x="13.75" y="238.5" font-size="12" fill="#262626" stroke="#262626" stroke-width="0.25" text-anchor="middle">1</text>
<rect x="1" y="244" width="24" height="19" fill="#d2d2d2" />
<text x="13.75" y="258.5" font-size="12" fill="#00703f" stroke="#00703f" stroke-width="0.25" text-anchor="middle">2</text>
<rect x="1" y="264" width="24" height="19" fill="#d2d2d2" />
<text x="13.75" y="278.5" font-size="12" fill="#00703f" stroke="#00703f" stroke-width="0.25" text-anchor="middle">3</text>
<rect x="1" y="284" width="24" height="19" fill="#d2d2d2" />
<text x="13.75" y="298.5" font-size="12" fill="#00703f" stroke="#00703f" stroke-width="0.25" text-anchor="middle">4</text>
<rect x="1" y="304" width="24" height="19" fill="#d2d2d2" />
<text x="13.75" y="318.5" font-size="12" fill="#00703f" stroke="#00703f" stroke-width="0.25" text-anchor="middle">5</text>
<rect x="1" y="324" width="24" height="19" fill="#d2d2d2" />
<text x="13.75" y="338.5" font-size="12" fill="#00703f" stroke="#00703f" stroke-width="0.25" text-anchor="middle">6</text>
<rect x="1" y="344" width="24" height="19" fill="#d2d2d2" />
<text x="13.75" y="358.5" font-size="12" fill="#00703f" stroke="#00703f" stroke-width="0.25" text-anchor="middle">7</text>
<rect x="1" y="364" width="24" height="19" fill="#d2d2d2" />
<text x="13.75" y="378.5" font-size="12" fill="#00703f" stroke="#00703f" stroke-width="0.25" text-anchor="middle">8</text>
<text x="13.75" y="398.5" font-size="12" fill="#262626" stroke="#262626" stroke-width="0.25" text-anchor="middle">9</text>
<text x="13.75" y="418.5" font-size="12" fill="#262626" stroke="#262626" stroke-width="0.25" text-anchor="middle">10</text>
<text x="13.75" y="438.5" font-size="12" fill="#262626" stroke="#262626" stroke-width="0.25" text-anchor="middle">11</text>
<rect x="1" y="243" width="25" height="1" fill="#bdbdbd" />
<rect x="1" y="263" width="25" height="1" fill="#bdbdbd" />
<rect x="1" y="283" width="25" height="1" fill="#bdbdbd" />
<rect x="1" y="303" width="25" height="1" fill="#bdbdbd" />
<rect x="1" y="323" width="25" height="1" fill="#bdbdbd" />
<rect x="1" y="343" width="25" height="1" fill="#bdbdbd" />
<rect x="1" y="363" width="25" height="1" fill="#bdbdbd" />
<rect x="1" y="383" width="25" height="1" fill="#bdbdbd" />
<rect x="1" y="403" width="25" height="1" fill="#bdbdbd" />
<rect x="1" y="423" width="25" height="1" fill="#bdbdbd" />
<rect x="1" y="443" width="25" height="1" fill="#bdbdbd" />
<rect x="25" y="243" width="2" height="140" fill="#00703f" />
<rect x="899" y="204" width="1" height="244" fill="#ababab" />
<rect x="1" y="448" width="899" height="1" fill="#ababab" />
<rect x="92" y="264" width="61" height="19" fill="#c6c6c6" />
<rect x="92" y="263" width="61" height="1" fill="#ababab" />
<rect x="92" y="284" width="61" height="19" fill="#c6c6c6" />
<rect x="92" y="283" width="61" height="1" fill="#ababab" />
<rect x="92" y="304" width="61" height="19" fill="#c6c6c6" />
<rect x="92" y="303" width="61" height="1" fill="#ababab" />
<rect x="92" y="324" width="61" height="19" fill="#c6c6c6" />
<rect x="92" y="323" width="61" height="1" fill="#ababab" />
<rect x="92" y="344" width="61" height="19" fill="#c6c6c6" />
<rect x="92" y="343" width="61" height="1" fill="#ababab" />
<rect x="92" y="364" width="61" height="18" fill="#c6c6c6" />
<rect x="92" y="363" width="61" height="1" fill="#ababab" />
<text x="93.2" y="259.0" font-size="13.0" fill="#000000" font-weight="normal" font-style="normal" textLength="54.5" lengthAdjust="spacingAndGlyphs">телефон</text>
<text x="93.2" y="279.0" font-size="13.0" fill="#000000" font-weight="normal" font-style="normal" textLength="54.5" lengthAdjust="spacingAndGlyphs">телефон</text>
<text x="93.2" y="299.0" font-size="13.0" fill="#000000" font-weight="normal" font-style="normal" textLength="54.5" lengthAdjust="spacingAndGlyphs">телефон</text>
<text x="93.2" y="319.0" font-size="13.0" fill="#000000" font-weight="normal" font-style="normal" textLength="54.5" lengthAdjust="spacingAndGlyphs">телефон</text>
<text x="93.2" y="339.0" font-size="13.0" fill="#000000" font-weight="normal" font-style="normal" textLength="54.5" lengthAdjust="spacingAndGlyphs">телефон</text>
<text x="93.2" y="359.0" font-size="13.0" fill="#000000" font-weight="normal" font-style="normal" textLength="54.5" lengthAdjust="spacingAndGlyphs">телефон</text>
<text x="93.2" y="379.0" font-size="13.0" fill="#000000" font-weight="normal" font-style="normal" textLength="54.5" lengthAdjust="spacingAndGlyphs">телефон</text>
<rect x="89" y="243" width="2" height="140" fill="#00703f" />
<rect x="154" y="243" width="2" height="140" fill="#00703f" />
<rect x="89" y="243" width="67" height="2" fill="#00703f" />
<rect x="152" y="381" width="4" height="2" fill="#00703f" />
<path d="M90 241.5 L154.5 241.5 L157.5 244.5 L157.5 381.5 L154.5 384.5 L90.5 384.5 L87.5 381.5 L87.5 244 Z" fill="none" stroke="#ff0000" stroke-width="3"/>
<rect x="1" y="449" width="920" height="27" fill="#e6e6e6" />
<rect x="101" y="448" width="107" height="23" fill="#ffffff" />
<rect x="101" y="448" width="1" height="23" fill="#ababab" />
<rect x="207" y="448" width="1" height="23" fill="#ababab" />
<rect x="101" y="471" width="107" height="2" fill="#00703f" />
<text x="113.3" y="465.9" font-size="14.3" fill="#00703f" font-weight="bold" font-style="normal" textLength="82.2" lengthAdjust="spacingAndGlyphs">microexcel.ru</text>
<path d="M32.4 457.5 L27.5 461.4 L32.4 465.3 Z" fill="#c3c3c3"/>
<path d="M56.4 457.5 L61.3 461.4 L56.4 465.3 Z" fill="#c3c3c3"/>
<circle cx="249.1" cy="461.7" r="7.3" fill="none" stroke="#6d6d6d" stroke-width="1"/>
<path d="M245 461.7 H253.2 M249.1 457.6 V465.8" stroke="#6d6d6d" stroke-width="1.6"/>
<rect x="553" y="457" width="2" height="2" fill="#b5b5b5" />
<rect x="553" y="461" width="2" height="2" fill="#b5b5b5" />
<rect x="553" y="465" width="2" height="2" fill="#b5b5b5" />
<rect x="570.5" y="455.5" width="14" height="14" fill="#ffffff" stroke="#bdbdbd" stroke-width="1"/>
<path d="M580 458.5 L575 462.5 L580 466.5 Z" fill="#6d6d6d"/>
<rect x="585.5" y="455.5" width="275" height="14" fill="#ffffff" stroke="#ababab" stroke-width="1"/>
<rect x="861" y="456" width="24" height="13" fill="#d4d4d4" />
<rect x="885.5" y="455.5" width="14" height="14" fill="#ffffff" stroke="#bdbdbd" stroke-width="1"/>
<path d="M890 458.5 L895 462.5 L890 466.5 Z" fill="#6d6d6d"/>
<rect x="902" y="204" width="17" height="244" fill="#e6e6e6" />
<rect x="903" y="221" width="15" height="213" fill="#d9d9d9" />
<rect x="903.5" y="206.5" width="14" height="14" fill="#ffffff" stroke="#bdbdbd" stroke-width="1"/>
<path d="M906.5 216 L910.5 212 L914.5 216 Z" fill="#6d6d6d"/>
<rect x="903.5" y="221.5" width="14" height="116" fill="#ffffff" stroke="#ababab" stroke-width="1"/>
<rect x="903.5" y="434.5" width="14" height="14" fill="#ffffff" stroke="#bdbdbd" stroke-width="1"/>
<path d="M906.5 439 L914.5 439 L910.5 443 Z" fill="#6d6d6d"/>
<rect x="1" y="476" width="920" height="22" fill="#f3f3f3" />
<rect x="1" y="477" width="1" height="21" fill="#fbfbfb" />
<rect x="1" y="497" width="920" height="1" fill="#fbfbfb" />
<text x="9.2" y="490.0" font-size="11.2" fill="#262626" font-weight="normal" font-style="normal" textLength="36.2" lengthAdjust="spacingAndGlyphs">Готово</text>
<text x="514.8" y="490.8" font-size="11.2" fill="#262626" font-weight="normal" font-style="normal" textLength="73.2" lengthAdjust="spacingAndGlyphs">Количество: 7</text>
<rect x="607" y="476.5" width="40" height="21" fill="#c6c6c6" />
<text x="872.9" y="489.8" font-size="11.2" fill="#262626" font-weight="normal" font-style="normal" textLength="28.9" lengthAdjust="spacingAndGlyphs">100 %</text>
<rect x="732.8" y="486" width="7.4" height="1.3" fill="#555" />
<rect x="745.7" y="487" width="100" height="1" fill="#999" />
<rect x="794" y="481.4" width="4.7" height="10.4" fill="#666" />
<path d="M850.5 486.6 H858.9 M854.7 482.4 V490.8" stroke="#555" stroke-width="1.3"/>
<rect x="0" y="0" width="1" height="499" fill="#00703f" />
<rect x="921" y="0" width="1" height="499" fill="#00703f" />
<rect x="0" y="498" width="922" height="1" fill="#00703f" />
<rect x="158.5" y="387.5" width="23" height="23" fill="#ffffff" stroke="#00703f" stroke-width="1.1"/>
<path d="M168.5 393.3 H176.3 V405 H164 V401.5" fill="none" stroke="#6d6d6d" stroke-width="1.2"/>
<rect x="168.5" y="392.3" width="8.3" height="2.6" fill="#6d6d6d" />
<path d="M168.6 390.9 L164.6 391.2 L162 397.3 H165 L162.6 402.3 L168.3 395.8 H165.6 Z" fill="#f8c172"/>
<rect x="168" y="396.3" width="4.1" height="1.3" fill="#ed7d31" />
<rect x="167" y="399.3" width="7.8" height="1.6" fill="#1e88c8" />
<rect x="167" y="402.3" width="5.9" height="1.6" fill="#1e9e6a" />
<rect x="1" y="476" width="920" height="1" fill="#d2d2d2" />
<circle cx="67.9" cy="482.8" r="2.9" fill="#5f5f58"/>
<path d="M72.1 481.1 H77.9 V493 H66 V487" fill="none" stroke="#5f5f58" stroke-width="1"/>
<rect x="72.1" y="481.1" width="5.8" height="2.4" fill="#5f5f58" />
<rect x="71.3" y="485.9" width="1.8" height="1" fill="#5f5f58" />
<rect x="74.3" y="485.9" width="1.8" height="1" fill="#5f5f58" />
<rect x="68.3" y="487.9" width="1.8" height="1" fill="#5f5f58" />
<rect x="71.3" y="487.9" width="1.8" height="1" fill="#5f5f58" />
<rect x="74.3" y="487.9" width="1.8" height="1" fill="#5f5f58" />
<rect x="68.3" y="489.8" width="1.8" height="1" fill="#5f5f58" />
<rect x="71.3" y="489.8" width="1.8" height="1" fill="#5f5f58" />
<rect x="74.3" y="489.8" width="1.8" height="1" fill="#5f5f58" />
<rect x="620.4" y="480.6" width="12" height="11.8" fill="none" stroke="#6d6d6d" stroke-width="1.3"/>
<path d="M624.4 480.6 V492.4 M628.4 480.6 V492.4 M620.4 484.5 H632.4 M620.4 488.5 H632.4" stroke="#6d6d6d" stroke-width="1.3"/>
<rect x="660.6" y="480.6" width="12.8" height="11.8" fill="none" stroke="#6d6d6d" stroke-width="1.2"/>
<rect x="663.6" y="483.3" width="6.8" height="6.6" fill="none" stroke="#6d6d6d" stroke-width="1"/>
<path d="M665.3 485.2 H668.8 M665.3 486.6 H668.8 M665.3 488 H668.8" stroke="#6d6d6d" stroke-width="0.8"/>
<rect x="700.8" y="480.6" width="12.6" height="11.8" fill="none" stroke="#6d6d6d" stroke-width="1.2"/>
<path d="M704 480.6 V487.5 M709 480.6 V487.5 H700.8" fill="none" stroke="#6d6d6d" stroke-width="1.1"/>
<path d="M206 176.6 L215.9 185.6 M215.9 176.6 L206 185.6" stroke="#c2c2c2" stroke-width="1.3"/>
<path d="M241.3 181.2 L245.7 185.6 L253.5 176.5" fill="none" stroke="#c2c2c2" stroke-width="1.5"/>
<text x="277.4" y="184.6" font-family="Liberation Serif" font-size="12.5" font-style="italic" font-weight="bold" fill="#555">f</text>
<text x="282.6" y="184.6" font-family="Liberation Serif" font-size="9" font-style="italic" font-weight="bold" fill="#555">x</text>
</svg>
</body></html>
